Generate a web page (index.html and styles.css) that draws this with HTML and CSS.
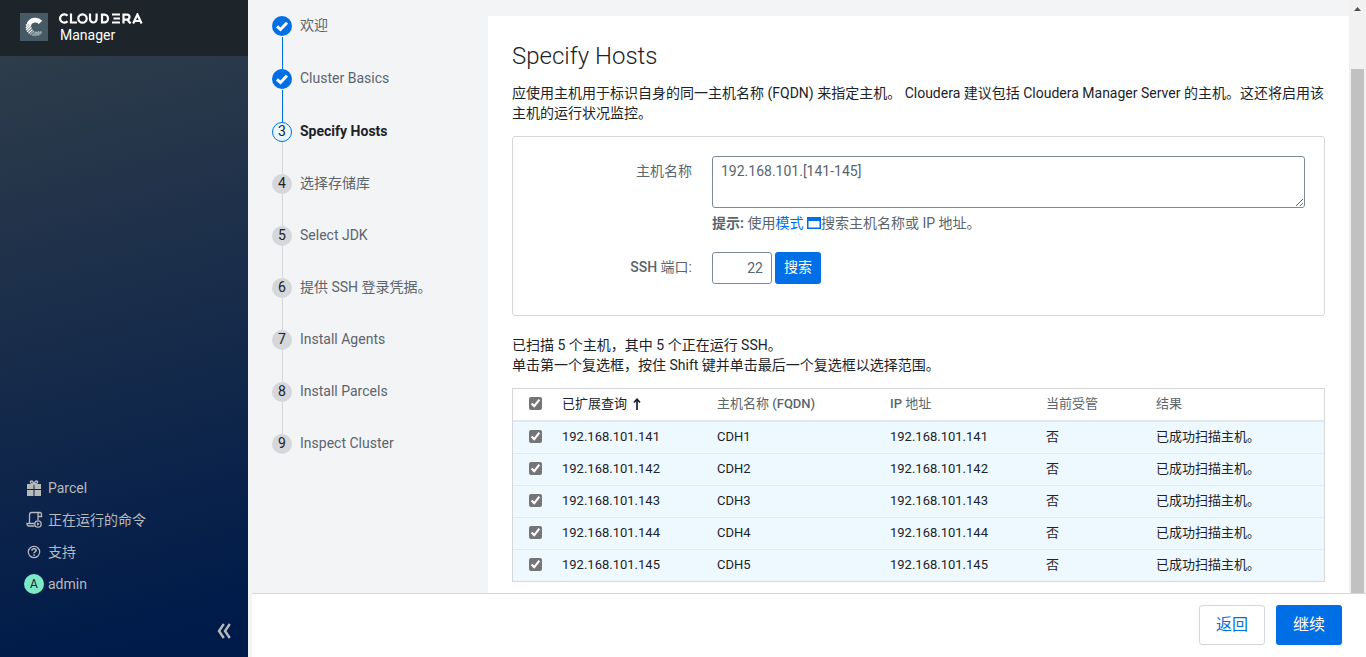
FILE: index.html
```html
<!DOCTYPE html>
<html lang="zh-CN">
<head>
<meta charset="utf-8">
<meta name="viewport" content="width=device-width, initial-scale=1">
<title>Cloudera Manager</title>
<link rel="stylesheet" href="styles.css">
</head>
<body>
<div class="app">
  <aside class="sidebar">
    <header class="brand">
      <svg class="brand-mark" viewBox="0 0 28 28" aria-hidden="true">
        <rect width="28" height="28" fill="#455a64"/>
        <path d="M20.500 9.300A7 6.800 0 0 0 9 11" fill="none" stroke="#fff" stroke-width="4.800"/>
        <path d="M6 12.500L10.500 8M5.800 15L11.500 9.500M6.200 17L11 12.200M7.200 18.800L11.500 14.500M8.500 20.400L12.500 16.600" stroke="#fff" stroke-width="1.300"/>
        <path d="M10 21.500L14 18M12.500 22.600L16.500 18.800M15 22.700L19 18.600M17.500 22.200L21.500 18.600" stroke="#b9c3c7" stroke-width="1.500"/>
        <path d="M10.500 19A7 6.800 0 0 0 21 19.500" fill="none" stroke="#7e8e95" stroke-width="3.600" opacity=".6"/>
      </svg>
      <div class="brand-text">
        <svg class="wordmark" viewBox="0 0 84 11" role="img" aria-label="Cloudera" fill="none" stroke="#fff" stroke-width="2.200">
          <path d="M8.500 2.800A4.200 4.200 0 1 0 8.500 8.200M12 .5V9.500H18"/>
          <circle cx="23.500" cy="5.500" r="4.200"/>
          <path d="M31 .5V6a3.300 3.500 0 0 0 6.600 0V.5M43 10.500V1.600H45.500a3.500 3.900 0 0 1 0 7.800H43M53 1.500H61M54.500 5.500H61M53 9.500H61M64.500 10.500V1.600H68a2.500 2.500 0 0 1 0 5H65M68.500 6.700L71.500 10.500M74.200 10.500L78.400 1.500L82.600 10.500M76 8H81.500"/>
        </svg>
        <span>Manager</span>
      </div>
    </header>
    <nav class="side-nav">
      <a href="#"><svg class="nav-icon" viewBox="0 0 20 20" aria-hidden="true"><path fill="currentColor" d="M3 6h6.500v5H3zM10.500 6H17v5h-6.500zM3 12h6.500v6H3zM10.500 12H17v6h-6.500z"/><path d="M9.500 6C6 6 5.500 3 7.500 3C9 3 10 6 10 6S11 3 12.500 3C14.500 3 14 6 10.500 6" fill="none" stroke="currentColor" stroke-width="1.300"/></svg>Parcel</a>
      <a href="#"><svg class="nav-icon" viewBox="0 0 20 20" aria-hidden="true" fill="none" stroke="currentColor" stroke-width="1.300"><path d="M5.500 13V5c0-1.500.5-2.500 2-2.500h8.500c-1.500 0-2 .8-2 2V10M14 6.500H17.500V4.500c0-1.300-.4-2-1.500-2M10.500 16H5C3.500 16 3 15 3 13.500H10.500"/><circle cx="14" cy="14" r="3.200"/><path d="M13 12.300L15.700 14L13 15.700Z" fill="currentColor" stroke="none"/></svg>正在运行的命令</a>
      <a href="#"><svg class="nav-icon" viewBox="0 0 20 20" aria-hidden="true" fill="none" stroke="currentColor"><circle cx="10" cy="10" r="5.700" stroke-width="1.200"/><path d="M7.900 8.600C8 6.100 12.100 6.200 12.100 8.600C12.100 9.900 10 9.800 10 11.200M10 12.200v1.500" stroke-width="1.600"/></svg>支持</a>
      <a href="#"><span class="avatar">A</span>admin</a>
    </nav>
    <button class="collapse" type="button" aria-label="Collapse"><svg viewBox="0 0 16 16" aria-hidden="true"><path d="M7.800 1L3 8L7.800 15M13.800 1L9 8L13.800 15" fill="none" stroke="currentColor" stroke-width="2.400"/></svg></button>
  </aside>
  <div class="main">
    <div class="scroller">
      <ol class="steps">
        <li class="done"><span class="dot"><svg viewBox="0 0 20 20" aria-hidden="true"><path d="M5 10.300L8.500 13.500L15 6.700" fill="none" stroke="#fff" stroke-width="3"/></svg></span><span class="name">欢迎</span></li>
        <li class="done"><span class="dot"><svg viewBox="0 0 20 20" aria-hidden="true"><path d="M5 10.300L8.500 13.500L15 6.700" fill="none" stroke="#fff" stroke-width="3"/></svg></span><span class="name">Cluster Basics</span></li>
        <li class="current"><span class="dot">3</span><span class="name">Specify Hosts</span></li>
        <li><span class="dot">4</span><span class="name">选择存储库</span></li>
        <li><span class="dot">5</span><span class="name">Select JDK</span></li>
        <li><span class="dot">6</span><span class="name">提供 SSH 登录凭据。</span></li>
        <li><span class="dot">7</span><span class="name">Install Agents</span></li>
        <li><span class="dot">8</span><span class="name">Install Parcels</span></li>
        <li><span class="dot">9</span><span class="name">Inspect Cluster</span></li>
      </ol>
      <main class="content">
        <h1>Specify Hosts</h1>
        <p class="intro">应使用主机用于标识自身的同一主机名称 (FQDN) 来指定主机。 Cloudera 建议包括 Cloudera Manager Server 的主机。这还将启用该主机的运行状况监控。</p>
        <form class="search-box">
          <label for="hosts">主机名称</label>
          <div class="field">
            <textarea id="hosts">192.168.101.[141-145]</textarea>
            <p class="hint"><b>提示:</b> 使用<a href="#">模式 <svg viewBox="0 0 14 12" aria-hidden="true"><path d="M0 0H14V12H0ZM1.500 4V10.500H12.500V4Z" fill="currentColor" fill-rule="evenodd"/></svg></a>搜索主机名称或 IP 地址。</p>
          </div>
          <label for="port"><b>SSH</b> 端口:</label>
          <div class="field port-row">
            <input id="port" type="text" value="22">
            <button class="search-btn" type="button">搜索</button>
          </div>
        </form>
        <p class="summary">已扫描 5 个主机，其中 5 个正在运行 SSH。<br>单击第一个复选框，按住 Shift 键并单击最后一个复选框以选择范围。</p>
        <table class="hosts">
          <colgroup><col class="c-check"><col class="c-query"><col class="c-name"><col class="c-ip"><col class="c-managed"><col></colgroup>
          <thead>
            <tr><th><input type="checkbox" checked aria-label="全选"></th><th class="sorted">已扩展查询 <svg viewBox="0 0 8 12" aria-hidden="true"><path d="M4 12V2M1 4.500L4 1.200L7 4.500" fill="none" stroke="currentColor" stroke-width="1.700"/></svg></th><th>主机名称 <b>(FQDN)</b></th><th><b>IP</b> 地址</th><th>当前受管</th><th>结果</th></tr>
          </thead>
          <tbody>
            <tr><td><input type="checkbox" checked aria-label="CDH1"></td><td>192.168.101.141</td><td>CDH1</td><td>192.168.101.141</td><td>否</td><td>已成功扫描主机。</td></tr>
            <tr><td><input type="checkbox" checked aria-label="CDH2"></td><td>192.168.101.142</td><td>CDH2</td><td>192.168.101.142</td><td>否</td><td>已成功扫描主机。</td></tr>
            <tr><td><input type="checkbox" checked aria-label="CDH3"></td><td>192.168.101.143</td><td>CDH3</td><td>192.168.101.143</td><td>否</td><td>已成功扫描主机。</td></tr>
            <tr><td><input type="checkbox" checked aria-label="CDH4"></td><td>192.168.101.144</td><td>CDH4</td><td>192.168.101.144</td><td>否</td><td>已成功扫描主机。</td></tr>
            <tr><td><input type="checkbox" checked aria-label="CDH5"></td><td>192.168.101.145</td><td>CDH5</td><td>192.168.101.145</td><td>否</td><td>已成功扫描主机。</td></tr>
          </tbody>
        </table>
      </main>
      <div class="scrollbar" aria-hidden="true"><svg viewBox="0 0 17 17"><path d="M5 11L8.500 7L12 11Z" fill="#505050"/></svg><div class="thumb"></div></div>
    </div>
    <footer class="actions">
      <button class="back" type="button">返回</button>
      <button class="next" type="button">继续</button>
    </footer>
  </div>
</div>
</body>
</html>
```
FILE: styles.css
```css
* { box-sizing: border-box; }
body {
  margin: 0;
  font-family: Roboto, "Noto Sans CJK SC", sans-serif;
  font-size: 14px;
  line-height: 20px;
  color: #1b2329;
}
button, input, textarea { font: inherit; }
h1, p { margin: 0; }
a { color: #006fe6; text-decoration: none; }
.app { display: flex; min-height: 100vh; }

.sidebar {
  flex: 0 0 248px;
  display: flex;
  flex-direction: column;
  color: #b8b9bb;
  background: linear-gradient(165deg, #313f4b 0%, #2b3a4a 14%, #001b4a 94%);
}
.brand {
  display: flex;
  align-items: flex-start;
  gap: 11px;
  height: 56px;
  padding: 13px 20px 0;
  background: #1e252a;
  color: #fff;
}
.brand-mark { width: 28px; height: 28px; }
.brand-text { display: flex; flex-direction: column; }
.brand-text span { padding-left: 1px; line-height: 22px; }
.wordmark { flex: none; width: 84px; height: 11px; }
.side-nav { margin-top: auto; padding: 0 24px; }
.side-nav a { display: flex; align-items: center; gap: 4px; height: 32px; color: inherit; }
.nav-icon { width: 20px; height: 20px; }
.avatar {
  width: 20px;
  height: 20px;
  border-radius: 50%;
  background: #7ce8c5;
  color: #1b2329;
  font-size: 12px;
  text-align: center;
}
.collapse {
  align-self: flex-end;
  width: 16px;
  height: 16px;
  margin: 23px 16px 18px;
  padding: 0;
  border: 0;
  background: none;
  color: inherit;
}
.collapse svg { display: block; }

.main { flex: 1; min-width: 0; display: flex; flex-direction: column; background: #f3f4f6; }
.scroller { flex: 1; display: flex; }
.steps {
  flex: 0 0 240px;
  margin: 0;
  padding: 16px 24px;
  list-style: none;
  color: #5a656d;
}
.steps li {
  display: flex;
  align-items: flex-start;
  gap: 8px;
  height: 52px;
  background: linear-gradient(#d5d7da, #d5d7da) 10px 20px / 1px 100% no-repeat;
}
.steps li:last-child { height: 20px; background: none; }
.steps .done { height: 53px; background: linear-gradient(#006fe6, #006fe6) 10px 21px / 1px 100% no-repeat; }
.name { line-height: 18px; }
.dot {
  flex: 0 0 20px;
  height: 20px;
  border-radius: 50%;
  background: #d5d7da;
  color: #1b2329;
  line-height: 18px;
  text-align: center;
}
.dot svg { display: block; }
.done .dot { background: #006fe6; }
.current { color: #1b2329; font-weight: 700; }
.current .dot { border: 1px solid #006fe6; background: #e9f7ff; font-weight: 400; line-height: 17px; }

.content { flex: 1; min-width: 0; margin-top: 16px; padding: 24px 24px 11px; background: #fff; }
h1 { margin-bottom: 11px; font-size: 24px; line-height: 32px; font-weight: 300; }
.search-box {
  display: grid;
  grid-template-columns: 179px 1fr;
  column-gap: 20px;
  row-gap: 19px;
  margin: 13px 0 19px;
  padding: 19px 19px 31px 0;
  border: 1px solid #d5d7da;
  border-radius: 3px;
  color: #5a656d;
}
.search-box label { padding-top: 5px; text-align: right; }
label b, th b { font-weight: 500; }
textarea, #port {
  display: block;
  border: 1px solid #7e8a93;
  border-radius: 3px;
  padding: 5px 8px;
  background: #fff;
  color: #5a656d;
}
textarea { width: 100%; height: 52px; padding-top: 4px; resize: vertical; }
.hint { margin-top: 5px; }
.hint svg { width: 14px; height: 12px; vertical-align: -1px; }
.port-row { display: flex; gap: 3px; }
#port { width: 60px; height: 32px; text-align: right; }
.search-btn { width: 46px; height: 32px; padding: 0 0 2px; border: 0; border-radius: 3px; background: #006fe6; color: #fff; }

.hosts {
  width: 100%;
  margin-top: 13px;
  table-layout: fixed;
  border: 1px solid #d5d7da;
  border-spacing: 0;
  font-size: 13px;
}
.c-check { width: 41px; }
.c-query { width: 155px; }
.c-name { width: 173px; }
.c-ip { width: 156px; }
.c-managed { width: 110px; }
.hosts th, .hosts td { height: 32px; padding: 0 8px 2px; text-align: left; line-height: 20px; border-bottom: 1px solid #e4e8eb; }
.hosts th { height: 33px; border-bottom-width: 2px; color: #5a656d; font-weight: 400; }
.hosts .sorted { color: #1b2329; }
.sorted svg { width: 8px; height: 12px; margin-left: 3px; vertical-align: -2px; }
.hosts td { background: #edf9ff; }
.hosts tbody tr:last-child td { border-bottom: 0; height: 31px; }
.hosts input { display: block; width: 13px; height: 13px; margin: 0 0 0 8px; accent-color: #757575; }

.scrollbar { flex: 0 0 17px; display: flex; flex-direction: column; background: #f1f1f1; }
.thumb { flex: 1; margin: 52px 2px 0; background: #c1c1c1; }
.actions {
  display: flex;
  justify-content: flex-end;
  gap: 11px;
  margin-left: 4px;
  padding: 11px 24px 12px;
  border-top: 1px solid #d5d7da;
  background: #fff;
}
.actions button { width: 66px; height: 40px; border: 0; border-radius: 3px; background: #006fe6; color: #fff; font-size: 16px; }
.actions .back { border: 1px solid #d5d7da; background: #fff; color: #006fe6; }
```
